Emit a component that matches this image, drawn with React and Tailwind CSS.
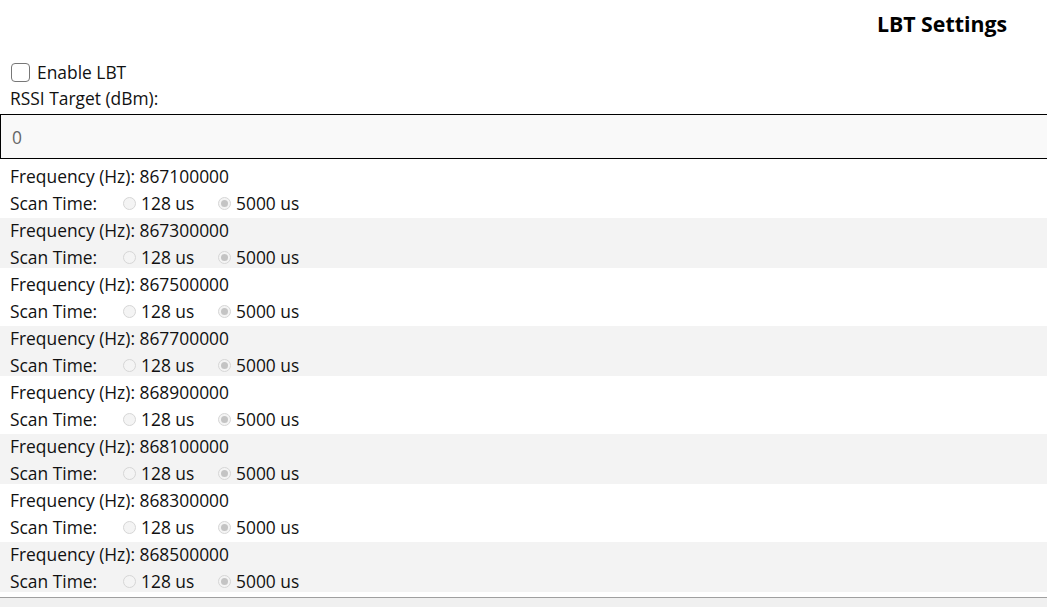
const channels = [
    '867100000',
    '867300000',
    '867500000',
    '867700000',
    '868900000',
    '868100000',
    '868300000',
    '868500000',
];

const Radio = ({ checked }) => (
    <span className="w-[13px] h-[13px] rounded-full border border-[#d6d6d6] bg-[#f4f4f4] flex items-center justify-center">
        {checked && <span className="w-[7px] h-[7px] rounded-full bg-[#c4c4c4]" />}
    </span>
);

const ChannelRow = ({ freq, shaded }) => (
    <div className={`h-[50px] mb-[4px] flex flex-col ${shaded ? 'bg-[#f3f3f3]' : 'bg-white'}`}>
        <div className="h-[24px] flex items-center pl-[10px]">Frequency (Hz): {freq}</div>
        <div className="mt-[3px] h-[24px] flex items-center pl-[10px]">
            <span className="w-[113px]">Scan Time:</span>
            <Radio />
            <span className="ml-[5px] w-[77px]">128 us</span>
            <Radio checked />
            <span className="ml-[5px]">5000 us</span>
        </div>
    </div>
);

const App = () => {
    return (
        <div
            className="w-[1047px] h-[607px] bg-white text-[#111] text-[17.4px] leading-[24px] flex flex-col overflow-hidden"
            style={{ fontFamily: '"Segoe UI", "Open Sans", "Noto Sans", sans-serif' }}
        >
            {/* Header */}
            <div className="h-[48px] flex items-center justify-end pr-[40px]">
                <span className="text-[21.3px] font-bold text-black">LBT Settings</span>
            </div>

            {/* Enable + RSSI */}
            <div className="mt-[11px] h-[26px] flex items-center pl-[11px]">
                <span className="w-[19px] h-[19px] rounded-[4px] border border-[#777] bg-white" />
                <span className="ml-[7px]">Enable LBT</span>
            </div>
            <div className="h-[26px] flex items-center pl-[10px]">RSSI Target (dBm):</div>
            <div className="mt-[3px] h-[45px] border border-r-0 border-black bg-[#f9f9f9] flex items-center pl-[11px] text-[#666]">
                0
            </div>

            {/* Channels */}
            <div className="mt-[5px] flex flex-col">
                {channels.map((f, i) => (
                    <ChannelRow key={i} freq={f} shaded={i % 2 === 1} />
                ))}
            </div>

            <div className="mt-px flex-1 border-t border-[#a0a0a0] bg-[#f0f0f0]" />
        </div>
    );
};

export default App;
